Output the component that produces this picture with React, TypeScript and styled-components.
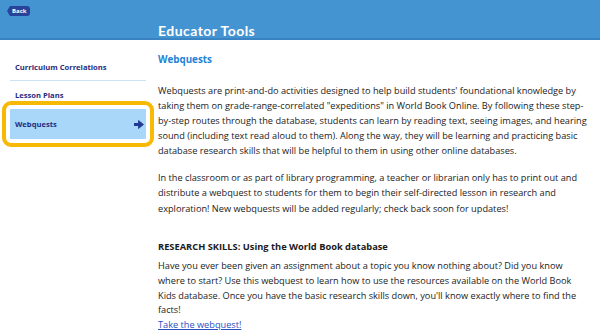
import React from "react";
import styled, { createGlobalStyle } from "styled-components";

const Global = createGlobalStyle`
  html, body { margin: 0; padding: 0; background: #ffffff; }
  body { font-family: "Open Sans", "Liberation Sans", sans-serif; overflow: hidden; }
  * { box-sizing: border-box; }
`;

const Page = styled.div`
  width: 600px;
  height: 335px;
  overflow: hidden;
  background: #fff;
`;

const Header = styled.header`
  height: 40px;
  background: #4594d2;
  border-bottom: 2px solid #3983c3;
  display: grid;
  grid-template-columns: 158px 1fr;
`;

const BackCell = styled.div`
  padding: 6px 0 0 7px;
`;

const BackButton = styled.button`
  position: relative;
  height: 10px;
  margin-left: 3px;
  padding: 0 4px 0 2px;
  border: none;
  border-radius: 0 3px 3px 0;
  background: #27439a;
  color: #fff;
  font-family: "Open Sans", sans-serif;
  font-weight: 700;
  font-size: 6px;
  line-height: 10px;
  cursor: pointer;
  display: block;
  &::before {
    content: "";
    position: absolute;
    left: -3px;
    top: 0;
    border-style: solid;
    border-width: 5px 3px 5px 0;
    border-color: transparent #27439a transparent transparent;
  }
`;

const Title = styled.h1`
  margin: 0;
  align-self: end;
  color: #ffffff;
  font-family: "Lato", "Liberation Sans", sans-serif;
  font-weight: 700;
  font-size: 14px;
  line-height: 14px;
  letter-spacing: 0.45px;
`;

const Main = styled.main`
  display: grid;
  grid-template-columns: 158px 1fr;
`;

const Nav = styled.nav`
  padding: 13px 0 0 10px;
`;

const NavList = styled.ul`
  list-style: none;
  margin: 0;
  padding: 0;
  width: 136px;
`;

const NavItem = styled.li<{ $active?: boolean; $divider?: boolean }>`
  height: ${(p) => (p.$active ? 30 : 28)}px;
  display: flex;
  align-items: center;
  justify-content: space-between;
  padding: 0 2px 0 5px;
  font-family: "Open Sans", sans-serif;
  font-weight: 700;
  font-size: 7.6px;
  color: #1f2c7e;
  background: ${(p) => (p.$active ? "#a8d7f9" : "transparent")};
  border-bottom: ${(p) => (p.$divider ? "1px solid #cfe2f2" : "none")};
  border-radius: ${(p) => (p.$active ? "1px" : "0")};
  outline: ${(p) => (p.$active ? "4.5px solid #f8b905" : "none")};
  outline-offset: 4px;
`;

const Content = styled.section`
  padding: 10px 0 0 0;
  color: #1b1b1b;
  font-size: 9.2px;
  white-space: nowrap;
`;

const Heading = styled.h2`
  margin: 0 0 12.5px;
  font-size: 9.8px;
  line-height: 20px;
  font-weight: 700;
  color: #1f84d6;
`;

const Para = styled.p<{ $gap: number; $lh?: number }>`
  margin: 0 0 ${(p) => p.$gap}px;
  line-height: ${(p) => p.$lh ?? 15.2}px;
`;

const Line = styled.span`
  display: block;
`;

const SubHeading = styled.h3`
  margin: 0 0 5.2px;
  font-size: 9.3px;
  line-height: 15px;
  font-weight: 700;
  color: #1b1b1b;
`;

const Link = styled.a`
  color: #2a4fc2;
  text-decoration: underline;
`;

const Arrow = () => (
  <svg width="10" height="9" viewBox="0 0 10 9">
    <rect x="0" y="3" width="5" height="3" fill="#1f3a92" />
    <path d="M4.5 0.5 L9.5 4.5 L4.5 8.5 Z" fill="#1f3a92" stroke="#1f3a92" strokeLinejoin="round" strokeWidth="0.8" />
  </svg>
);

const intro = [
  "Webquests are print-and-do activities designed to help build students' foundational knowledge by",
  "taking them on grade-range-correlated \"expeditions\" in World Book Online. By following these step-",
  "by-step routes through the database, students can learn by reading text, seeing images, and hearing",
  "sound (including text read aloud to them). Along the way, they will be learning and practicing basic",
  "database research skills that will be helpful to them in using other online databases.",
];

const classroom = [
  "In the classroom or as part of library programming, a teacher or librarian only has to print out and",
  "distribute a webquest to students for them to begin their self-directed lesson in research and",
  "exploration! New webquests will be added regularly; check back soon for updates!",
];

const research = [
  "Have you ever been given an assignment about a topic you know nothing about? Did you know",
  "where to start? Use this webquest to learn how to use the resources available on the World Book",
  "Kids database. Once you have the basic research skills down, you'll know exactly where to find the",
  "facts!",
];

const Lines = ({ lines }: { lines: string[] }) => (
  <>
    {lines.map((l) => (
      <Line key={l}>{l}</Line>
    ))}
  </>
);

export default function App() {
  return (
    <Page>
      <Global />
      <Header>
        <BackCell>
          <BackButton>Back</BackButton>
        </BackCell>
        <Title>Educator Tools</Title>
      </Header>
      <Main>
        <Nav>
          <NavList>
            <NavItem $divider>Curriculum Correlations</NavItem>
            <NavItem>Lesson Plans</NavItem>
            <NavItem $active>
              Webquests
              <Arrow />
            </NavItem>
          </NavList>
        </Nav>
        <Content>
          <Heading>Webquests</Heading>
          <Para $gap={11.6}>
            <Lines lines={intro} />
          </Para>
          <Para $gap={23.5}>
            <Lines lines={classroom} />
          </Para>
          <SubHeading>RESEARCH SKILLS: Using the World Book database</SubHeading>
          <Para $gap={0} $lh={14.6}>
            <Lines lines={research} />
            <Line>
              <Link href="#">Take the webquest!</Link>
            </Line>
          </Para>
        </Content>
      </Main>
    </Page>
  );
}
